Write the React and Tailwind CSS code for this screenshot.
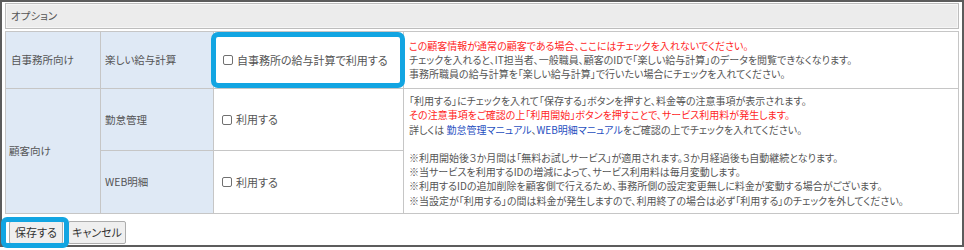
const rowLabel = 'bg-[#dfe9f5] border border-[#c6c6c6] align-middle text-[10.5px] text-[#555]';
const cell = 'bg-white border border-[#c6c6c6] align-middle';

function Check({ label, className = '' }) {
  return (
    <label className={`flex items-center gap-[4px] text-[#555] ${className}`}>
      <span className="inline-block h-[10px] w-[10px] rounded-[2px] border border-[#707070] bg-white" />
      <span>{label}</span>
    </label>
  );
}

export default function App() {
  return (
    <div className="relative h-[250px] w-[964px] bg-white font-['Noto_Sans_CJK_JP','Noto_Sans',sans-serif] [font-feature-settings:'palt']">
      <div className="h-[247px] w-[964px] border-2 border-[#5c5c5c] px-[3px] pt-px">
        {/* Section title */}
        <div className="flex h-[26px] items-center border border-[#bdbdbd] bg-[#ececec] px-[5px] text-[10.5px] text-[#555] shadow-[inset_0_0_0_1px_#f6f6f6]">
          オプション
        </div>

        {/* Options table */}
        <table className="mt-[2px] w-full border-collapse border border-[#bdbdbd]">
          <colgroup>
            <col className="w-[95px]" />
            <col className="w-[113px]" />
            <col className="w-[190px]" />
            <col />
          </colgroup>
          <tbody>
            <tr className="h-[57px]">
              <td className={`${rowLabel} pl-[5px]`}>自事務所向け</td>
              <td className={`${rowLabel} pl-[4px]`}>楽しい給与計算</td>
              <td className={`${cell} pl-[9px] text-[11px]`}>
                <Check label="自事務所の給与計算で利用する" />
              </td>
              <td className={`${cell} pl-[5px] text-[10px] leading-[14px] text-[#555]`}>
                <p className="text-[#ff1f1f]">この顧客情報が通常の顧客である場合、ここにはチェックを入れないでください。</p>
                <p>チェックを入れると、IT担当者、一般職員、顧客のIDで「楽しい給与計算」のデータを閲覧できなくなります。</p>
                <p>事務所職員の給与計算を「楽しい給与計算」で行いたい場合にチェックを入れてください。</p>
              </td>
            </tr>
            <tr className="h-[62px]">
              <td rowSpan={2} className={`${rowLabel} pl-[3px]`}>顧客向け</td>
              <td className={`${rowLabel} pl-[4px]`}>勤怠管理</td>
              <td className={`${cell} pl-[8px] text-[11px]`}>
                <Check label="利用する" />
              </td>
              <td rowSpan={2} className={`${cell} pl-[5px] text-[10px] leading-[14.3px] text-[#555]`}>
                <p>「利用する」にチェックを入れて「保存する」ボタンを押すと、料金等の注意事項が表示されます。</p>
                <p className="text-[#ff1f1f]">その注意事項をご確認の上「利用開始」ボタンを押すことで、サービス利用料が発生します。</p>
                <p>
                  詳しくは <span className="text-[#1f4fbf]">勤怠管理マニュアル</span>、
                  <span className="text-[#1f4fbf]">WEB明細マニュアル</span>をご確認の上でチェックを入れてください。
                </p>
                <p className="mt-[14px]">※利用開始後３か月間は「無料お試しサービス」が適用されます。３か月経過後も自動継続となります。</p>
                <p>※当サービスを利用するIDの増減によって、サービス利用料は毎月変動します。</p>
                <p>※利用するIDの追加削除を顧客側で行えるため、事務所側の設定変更無しに料金が変動する場合がございます。</p>
                <p>※当設定が「利用する」の間は料金が発生しますので、利用終了の場合は必ず「利用する」のチェックを外してください。</p>
              </td>
            </tr>
            <tr className="h-[63px]">
              <td className={`${rowLabel} pl-[4px]`}>WEB明細</td>
              <td className={`${cell} pl-[8px] text-[11px]`}>
                <Check label="利用する" />
              </td>
            </tr>
          </tbody>
        </table>

        {/* Actions */}
        <div className="mt-[7px] flex gap-[5px] pl-[4px] text-[11px] text-[#333]">
          <button className="h-[23px] w-[54px] rounded-[2px] border border-[#adadad] bg-[#efefef]">保存する</button>
          <button className="h-[23px] w-[58px] rounded-[2px] border border-[#adadad] bg-[#efefef]">キャンセル</button>
        </div>
      </div>

      {/* Highlight annotations */}
      <div className="pointer-events-none absolute left-[211px] top-[32px] h-[56px] w-[194px] rounded-[7px] border-[5px] border-[#12a5e2]" />
      <div className="pointer-events-none absolute left-px top-[217px] h-[31px] w-[68px] rounded-[6px] border-[5px] border-[#12a5e2]" />
    </div>
  );
}
